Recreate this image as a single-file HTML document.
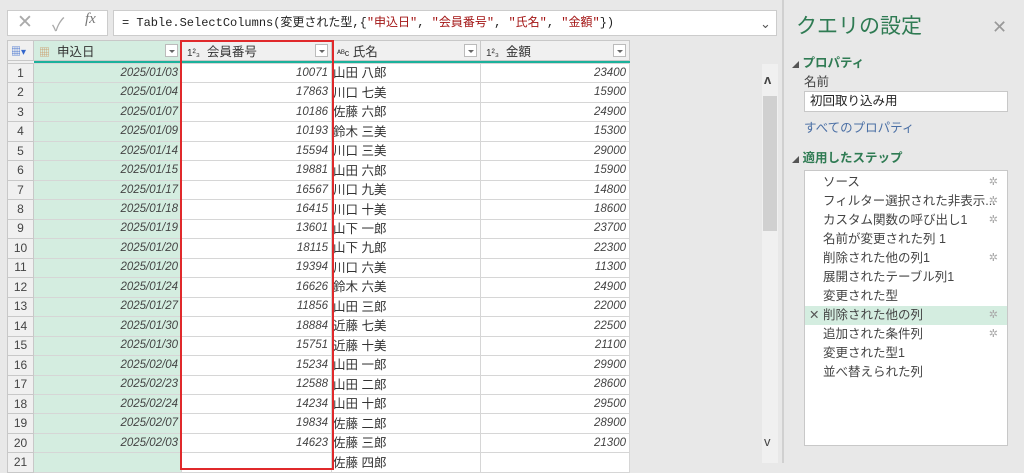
<!DOCTYPE html>
<html><head><meta charset="utf-8"><style>
*{box-sizing:border-box;margin:0;padding:0}
body{width:1024px;height:463px;overflow:hidden;background:#e8e8e8;font-family:"Liberation Sans","Noto Sans CJK JP",sans-serif;position:relative;color:#333}
.a{position:absolute}
table{border-collapse:collapse;position:absolute;left:7px;top:40px;table-layout:fixed}
td{height:19.47px;line-height:17px;border:1px solid #d6d6d6;font-size:12px;padding:0 3px;white-space:nowrap;overflow:hidden;background:#fff;vertical-align:middle}
td.n{background:#f0f0f0;text-align:center;color:#444;border-color:#c8c8c8}
td.d{background:#d4ede0;text-align:right;font-style:italic;color:#444;font-size:11.5px}
td.r{text-align:right;font-style:italic;color:#444;font-size:11.5px}
td.t{padding-left:1px;font-size:12.5px;line-height:16px}
th{height:20px;background:#f0f0f0;border:1px solid #c8c8c8;font-weight:normal;font-size:12.5px;text-align:left;padding-left:5px;position:relative;color:#333}
th.s{background:#d4ede0}
.dd{position:absolute;right:3px;top:3px;width:13px;height:13px;border:1px solid #bbb;background:#fff}
.dd:after{content:"";position:absolute;left:3px;top:5px;border:3px solid transparent;border-top:3px solid #666}
.st{font-size:12.5px;color:#444;height:19px;line-height:19px;padding-left:18px;position:relative}
.g{position:absolute;right:9px;top:0;color:#aaa;font-size:11px}
</style></head><body>
<div class="a" style="left:7px;top:10px;width:101px;height:26px;background:#fff;border:1px solid #ccc"></div>
<div class="a" style="left:17px;top:11px;font-size:19px;color:#aaa">✕</div>
<div class="a" style="left:52px;top:11px;font-size:18px;color:#aaa">✓</div>
<div class="a" style="left:85px;top:11px;font-size:15px;color:#777;font-style:italic;font-family:'Liberation Serif',serif">fx</div>
<div class="a" style="left:113px;top:10px;width:664px;height:26px;background:#fff;border:1px solid #ccc;font-family:'Liberation Mono','Noto Sans CJK JP',monospace;font-size:12px;line-height:24px;padding-left:8px;color:#222">= Table.SelectColumns(変更された型,{<span style="color:#a31515">"申込日"</span>, <span style="color:#a31515">"会員番号"</span>, <span style="color:#a31515">"氏名"</span>, <span style="color:#a31515">"金額"</span>})</div>
<div class="a" style="left:760px;top:16px;font-size:13px;color:#555">⌄</div>
<table>
<colgroup><col style="width:26px"><col style="width:148px"><col style="width:150px"><col style="width:149px"><col style="width:149px"></colgroup>
<tr><th style="padding-left:3px;font-size:10px;color:#36c">▦▾</th><th class="s"><span style="color:#c96;font-size:11px">▦</span>&nbsp; 申込日<span class="dd"></span></th><th><span style="font-size:10px">1²₃</span>&nbsp; 会員番号<span class="dd"></span></th><th><span style="font-size:9px">ᴬᴮc</span> 氏名<span class="dd"></span></th><th><span style="font-size:10px">1²₃</span>&nbsp; 金額<span class="dd"></span></th></tr>
<tr><td style="height:3px;padding:0;background:#f0f0f0;border:none;border-left:1px solid #c8c8c8"></td><td colspan="4" style="height:3px;padding:0;background:#1bb19b;border:none"></td></tr>
<tr><td class="n">1</td><td class="d">2025/01/03</td><td class="r">10071</td><td class="t">山田 八郎</td><td class="r">23400</td></tr>
<tr><td class="n">2</td><td class="d">2025/01/04</td><td class="r">17863</td><td class="t">川口 七美</td><td class="r">15900</td></tr>
<tr><td class="n">3</td><td class="d">2025/01/07</td><td class="r">10186</td><td class="t">佐藤 六郎</td><td class="r">24900</td></tr>
<tr><td class="n">4</td><td class="d">2025/01/09</td><td class="r">10193</td><td class="t">鈴木 三美</td><td class="r">15300</td></tr>
<tr><td class="n">5</td><td class="d">2025/01/14</td><td class="r">15594</td><td class="t">川口 三美</td><td class="r">29000</td></tr>
<tr><td class="n">6</td><td class="d">2025/01/15</td><td class="r">19881</td><td class="t">山田 六郎</td><td class="r">15900</td></tr>
<tr><td class="n">7</td><td class="d">2025/01/17</td><td class="r">16567</td><td class="t">川口 九美</td><td class="r">14800</td></tr>
<tr><td class="n">8</td><td class="d">2025/01/18</td><td class="r">16415</td><td class="t">川口 十美</td><td class="r">18600</td></tr>
<tr><td class="n">9</td><td class="d">2025/01/19</td><td class="r">13601</td><td class="t">山下 一郎</td><td class="r">23700</td></tr>
<tr><td class="n">10</td><td class="d">2025/01/20</td><td class="r">18115</td><td class="t">山下 九郎</td><td class="r">22300</td></tr>
<tr><td class="n">11</td><td class="d">2025/01/20</td><td class="r">19394</td><td class="t">川口 六美</td><td class="r">11300</td></tr>
<tr><td class="n">12</td><td class="d">2025/01/24</td><td class="r">16626</td><td class="t">鈴木 六美</td><td class="r">24900</td></tr>
<tr><td class="n">13</td><td class="d">2025/01/27</td><td class="r">11856</td><td class="t">山田 三郎</td><td class="r">22000</td></tr>
<tr><td class="n">14</td><td class="d">2025/01/30</td><td class="r">18884</td><td class="t">近藤 七美</td><td class="r">22500</td></tr>
<tr><td class="n">15</td><td class="d">2025/01/30</td><td class="r">15751</td><td class="t">近藤 十美</td><td class="r">21100</td></tr>
<tr><td class="n">16</td><td class="d">2025/02/04</td><td class="r">15234</td><td class="t">山田 一郎</td><td class="r">29900</td></tr>
<tr><td class="n">17</td><td class="d">2025/02/23</td><td class="r">12588</td><td class="t">山田 二郎</td><td class="r">28600</td></tr>
<tr><td class="n">18</td><td class="d">2025/02/24</td><td class="r">14234</td><td class="t">山田 十郎</td><td class="r">29500</td></tr>
<tr><td class="n">19</td><td class="d">2025/02/07</td><td class="r">19834</td><td class="t">佐藤 二郎</td><td class="r">28900</td></tr>
<tr><td class="n">20</td><td class="d">2025/02/03</td><td class="r">14623</td><td class="t">佐藤 三郎</td><td class="r">21300</td></tr>
<tr><td class="n">21</td><td class="d"></td><td class="r"></td><td class="t">佐藤 四郎</td><td class="r"></td></tr>
</table>
<div class="a" style="left:180px;top:40px;width:154px;height:430px;border:2px solid #e0292b"></div>
<div class="a" style="left:762px;top:64px;width:16px;height:399px;background:#f0f0f0"></div>
<div class="a" style="left:763px;top:96px;width:14px;height:135px;background:#d0d0d0"></div>
<div class="a" style="left:764px;top:72px;font-size:13px;color:#444;font-weight:bold">ʌ</div>
<div class="a" style="left:764px;top:434px;font-size:13px;color:#444">v</div>
<div class="a" style="left:782px;top:0;width:2px;height:463px;background:#d0d0d0"></div>
<div class="a" style="left:796px;top:10px;font-size:21px;color:#2f7b53">クエリの設定</div>
<div class="a" style="left:992px;top:17px;font-size:18px;color:#999">✕</div>
<div class="a" style="left:792px;top:52px;font-size:12.5px;color:#2f7b53;font-weight:bold"><span style="font-size:7px;color:#555">◢</span> プロパティ</div>
<div class="a" style="left:804px;top:71px;font-size:12.5px;color:#444">名前</div>
<div class="a" style="left:804px;top:91px;width:204px;height:21px;background:#fff;border:1px solid #c8c8c8;font-size:12.5px;padding-left:5px;line-height:19px;color:#222">初回取り込み用</div>
<div class="a" style="left:804px;top:117px;font-size:12.5px;color:#4a6fa5">すべてのプロパティ</div>
<div class="a" style="left:792px;top:147px;font-size:12.5px;color:#2f7b53;font-weight:bold"><span style="font-size:7px;color:#555">◢</span> 適用したステップ</div>
<div class="a" style="left:804px;top:170px;width:204px;height:276px;background:#fff;border:1px solid #c8c8c8;padding-top:2px">
<div class="st">ソース<span class="g">✲</span></div>
<div class="st">フィルター選択された非表示...<span class="g">✲</span></div>
<div class="st">カスタム関数の呼び出し1<span class="g">✲</span></div>
<div class="st">名前が変更された列 1</div>
<div class="st">削除された他の列1<span class="g">✲</span></div>
<div class="st">展開されたテーブル列1</div>
<div class="st">変更された型</div>
<div class="st" style="background:#d4ede0"><span style="position:absolute;left:4px;color:#555">✕</span>削除された他の列<span class="g">✲</span></div>
<div class="st">追加された条件列<span class="g">✲</span></div>
<div class="st">変更された型1</div>
<div class="st">並べ替えられた列</div>
</div>
</body></html>
